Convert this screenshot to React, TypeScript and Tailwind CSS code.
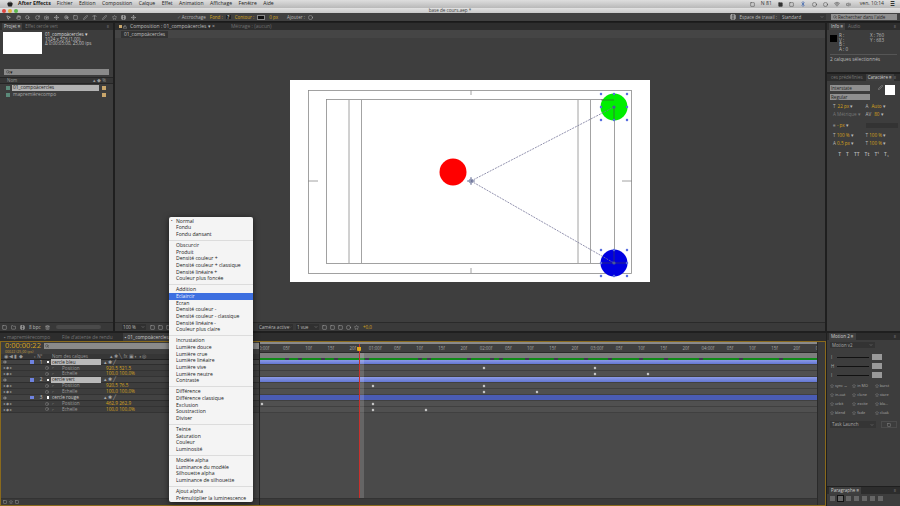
import {
  Apple, Bluetooth, Camera, ChevronDown, Circle, Clock, Eye, Film, Folder, Hand, Lock, MousePointer2, Move, Pen, RotateCw, Search, Square, Star, Trash2, Type, Volume2, Wifi, ZoomIn,
} from "lucide-react";

const FONT = { fontFamily: '"Open Sans", "Liberation Sans", sans-serif' };

const menuGroups = [
  ["Normal", "Fondu", "Fondu dansant"],
  ["Obscurcir", "Produit", "Densité couleur +", "Densité couleur + classique", "Densité linéaire +", "Couleur plus foncée"],
  ["Addition", "Eclaircir", "Ecran", "Densité couleur -", "Densité couleur - classique", "Densité linéaire -", "Couleur plus claire"],
  ["Incrustation", "Lumière douce", "Lumière crue", "Lumière linéaire", "Lumière vive", "Lumière neutre", "Contraste"],
  ["Différence", "Différence classique", "Exclusion", "Soustraction", "Diviser"],
  ["Teinte", "Saturation", "Couleur", "Luminosité"],
  ["Modèle alpha", "Luminance du modèle", "Silhouette alpha", "Luminance de silhouette"],
  ["Ajout alpha", "Prémultiplier la luminescence"],
];

const layers = [
  { kind: "layer", name: "cercle bleu", selected: true, color: "#6f83e0", bar: "bg-gradient-to-b from-[#8c9ae6] to-[#6477d2]", keys: [] as number[] },
  { kind: "prop", name: "Position", value: "920,5 521,5", keys: [484, 595] },
  { kind: "prop", name: "Echelle", value: "100,0 100,0%", keys: [595, 648] },
  { kind: "layer", name: "cercle vert", selected: true, color: "#6f83e0", bar: "bg-gradient-to-b from-[#8c9ae6] to-[#6477d2]", keys: [] },
  { kind: "prop", name: "Position", value: "920,5 76,5", keys: [373, 484] },
  { kind: "prop", name: "Echelle", value: "100,0 100,0%", keys: [484, 537] },
  { kind: "layer", name: "cercle rouge", selected: false, color: "#6f83e0", bar: "bg-[#4a5cb4]", keys: [] },
  { kind: "prop", name: "Position", value: "462,9 262,9", keys: [262, 373] },
  { kind: "prop", name: "Echelle", value: "100,0 100,0%", keys: [373, 426] },
];

const rulerLabels = ["0:00f", "05f", "10f", "15f", "20f", "01:00f", "05f", "10f", "15f", "20f", "02:00f", "05f", "10f", "15f", "20f", "03:00f", "05f", "10f", "15f", "20f", "04:00f", "05f", "10f", "15f", "20f", "05:"];
const workMarks = [286, 299, 322, 335, 366, 419, 428, 468, 491, 500, 526, 555, 585, 609, 640, 665, 700, 740, 780];

function Tab({ label, active }: { label: string; active?: boolean }) {
  return (
    <div className={`flex h-full shrink-0 items-center whitespace-nowrap px-[2px] text-[4.5px] ${active ? "bg-[#3f3f3f] text-[#cfcfcf]" : "text-[#777]"}`}>
      {label}
    </div>
  );
}

function PanelTabs({ tabs }: { tabs: { label: string; active?: boolean }[] }) {
  return (
    <div className="flex h-[7px] shrink-0 items-center justify-between overflow-hidden bg-[#2d2d2d] pl-[2px] pr-[4px]">
      <div className="flex h-full items-center gap-[1px]">
        {tabs.map((t) => (
          <Tab key={t.label} label={t.label} active={t.active} />
        ))}
      </div>
      <span className="shrink-0 text-[4px] text-[#aaa]">≡</span>
    </div>
  );
}

function ContextMenu() {
  return (
    <div className="absolute left-[169px] top-[217px] w-[84px] rounded-[2px] bg-[#f4f4f4] py-[1px] text-[5.1px] text-[#222] shadow-[0_1px_6px_rgba(0,0,0,0.6)]">
      {menuGroups.map((group, i) => (
        <div key={i} className={i > 0 ? "mt-[2px] border-t border-[#dcdcdc] pt-[1.2px]" : ""}>
          {group.map((item) => (
            <div
              key={item}
              className={`flex h-[6.7px] items-center whitespace-nowrap pl-[7px] ${item === "Eclaircir" ? "bg-[#3d6fe0] text-[#e8ecff]" : ""}`}
            >
              {item === "Normal" && <span className="absolute left-[2px] text-[4px]">•</span>}
              {item}
            </div>
          ))}
        </div>
      ))}
    </div>
  );
}

function CompDrawing() {
  const handles = (cx: number, cy: number) =>
    [-13, 0, 13].flatMap((dx) => [-13, 0, 13].filter((dy) => dx !== 0 || dy !== 0).map((dy) => [cx + dx, cy + dy]));
  return (
    <svg width="360" height="202" viewBox="290 80 360 202" className="block bg-white">
      <g fill="none" stroke="#8b8b8b" strokeWidth="0.8">
        <rect x="308.5" y="90.5" width="323" height="183" />
        <rect x="326.5" y="99.5" width="288" height="164" />
        <path d="M349 100V263M361.5 100V263M578 100V263M590.5 100V263" />
        <path d="M471 90V95M471 268V273M308 181H318M622 181H632" />
      </g>
      <circle cx="453" cy="172" r="13.5" fill="#ff0000" />
      <circle cx="614" cy="107" r="13.5" fill="#00ee00" />
      <circle cx="614" cy="263" r="13.5" fill="#0000e0" />
      <path d="M471 181L614 107M471 181L614 263" stroke="#77779a" strokeWidth="0.8" strokeDasharray="2 1" />
      <path d="M614 107V120M601 100H614M614 263V250M601 263H627" stroke="#444" strokeWidth="0.6" />
      <path d="M467 181H475M471 177V185" stroke="#55608a" strokeWidth="0.8" />
      <circle cx="471" cy="181" r="2" fill="none" stroke="#55608a" strokeWidth="0.6" />
      {[...handles(614, 107), ...handles(614, 263)].map(([x, y]) => (
        <rect key={`${x}-${y}`} x={x - 1.2} y={y - 1.2} width="2.4" height="2.4" rx="1" fill="#5a6fe0" />
      ))}
      <circle cx="614" cy="107" r="1.6" fill="#4a5a9a" />
      <circle cx="614" cy="263" r="1.6" fill="#4a5a9a" />
    </svg>
  );
}

function MenuBar() {
  const items = ["Fichier", "Edition", "Composition", "Calque", "Effet", "Animation", "Affichage", "Fenêtre", "Aide"];
  return (
    <div className="flex h-[8px] shrink-0 items-center justify-between bg-gradient-to-b from-[#dedede] to-[#b9b9b9] pl-[7px] pr-[5px] text-[5.1px] text-[#222]">
      <div className="flex items-center">
        <Apple size={6} fill="#222" strokeWidth={1} />
        <span className="ml-[5px] text-[5.3px] font-bold">After Effects</span>
        <div className="ml-[6px] flex gap-[6.5px]">
          {items.map((m) => (
            <span key={m}>{m}</span>
          ))}
        </div>
      </div>
      <div className="flex items-center gap-[6px] text-[#333]">
        <Square size={5} />
        <span>N 81</span>
        <Square size={5} fill="#333" />
        <Square size={5} />
        <Bluetooth size={6} className="text-[#1c4fa8]" />
        <Circle size={5} />
        <Circle size={5} />
        <Wifi size={6} />
        <Volume2 size={5} />
        <span className="ml-[3px]">ven. 10:14</span>
        <span className="text-[6px]">≣</span>
      </div>
    </div>
  );
}

function TitleBar() {
  return (
    <div className="relative flex h-[5px] shrink-0 items-center justify-center bg-gradient-to-b from-[#e2e2e2] to-[#c8c8c8]">
      <div className="absolute left-[2px] top-[0.5px] flex gap-[2px]">
        <div className="size-[4px] rounded-full bg-[#e0443e]" />
        <div className="size-[4px] rounded-full bg-[#e2b33c]" />
        <div className="size-[4px] rounded-full bg-[#5cb84c]" />
      </div>
      <span className="text-[4.6px] leading-none text-[#444]">base de cours.aep *</span>
    </div>
  );
}

function ToolBar() {
  const tools = [MousePointer2, Hand, Search, RotateCw, Camera, Move, ZoomIn, Square, Pen, Type, Pen, Star, Film, Move];
  return (
    <div className="flex h-[9px] shrink-0 items-center justify-between border-b border-[#1a1a1a] bg-[#404040] pl-[6px] pr-[3px] text-[4.5px] text-[#bbb]">
      <div className="flex items-center">
        <div className="flex items-center gap-[4.6px]">
          {tools.map((Icon, i) => (
            <Icon key={i} size={5} className={i === 0 ? "text-white" : "text-[#c8c8c8]"} />
          ))}
        </div>
        <span className="ml-[41px] text-[#777]">✓</span>
        <span className="ml-[1px]">Accrochage</span>
        <span className="ml-[4px] text-[#d7a31c]">Fond :</span>
        <span className="ml-[3px] bg-[#222] px-[1.5px] text-white">?</span>
        <span className="ml-[4px] text-[#d7a31c]">Contour :</span>
        <span className="ml-[3px] h-[5px] w-[8px] border border-[#888] bg-[#111]" />
        <span className="ml-[4px] text-[#d7a31c]">0 px</span>
        <span className="ml-[9px]">Ajouter :</span>
        <Circle size={5} className="ml-[3px]" />
      </div>
      <div className="flex items-center">
        <Film size={6} className="text-[#ccc]" />
        <span className="ml-[3px]">Espace de travail :</span>
        <div className="ml-[3px] flex h-[6px] w-[46px] items-center justify-between bg-[#353535] px-[2px]">
          <span>Standard</span>
          <ChevronDown size={4} />
        </div>
        <div className="ml-[5px] flex h-[6px] w-[66px] items-center bg-[#8f8f8f] px-[2px] text-[#222]">
          <Search size={4} />
          <span className="ml-[1px]">Rechercher dans l'aide</span>
        </div>
      </div>
    </div>
  );
}

function ProjectPanel() {
  return (
    <div className="flex w-[113px] shrink-0 flex-col bg-[#3d3d3d]">
      <PanelTabs tabs={[{ label: "Projet ≡", active: true }, { label: "Effet cercle vert" }]} />
      <div className="flex px-[3px] pt-[2px]">
        <div className="h-[22px] w-[39px] bg-white" />
        <div className="ml-[3px] text-[4.5px] leading-[4.5px] text-[#c4c4c4]">
          <div className="text-[#ddd]">01_compoàcercles ▾</div>
          <div>1024 x 576 (1,00)</div>
          <div>Δ 0:00:05:00, 25,00 ips</div>
        </div>
      </div>
      <div className="mx-[4px] mt-[15px] flex h-[6px] items-center bg-[#8a8a8a] px-[2px] text-[4.5px] text-[#222]">
        <Search size={4} />▾
      </div>
      <div className="mt-[2px] flex h-[7px] items-center justify-between border-y border-[#262626] bg-[#363636] px-[7px] text-[4.5px] text-[#999]">
        <span>Nom</span>
        <span>▴ ◆ %</span>
      </div>
      <div className="flex h-[7px] items-center pl-[6px]">
        <div className="size-[4px] bg-[#5b8a7a]" />
        <div className="ml-[2px] flex h-[6px] w-[87px] items-center bg-[#b3b3b3] px-[1px] text-[4.8px] text-[#222]">01_compoàcercles</div>
        <div className="ml-[3px] size-[4px] bg-[#c9a66b]" />
      </div>
      <div className="flex h-[7px] items-center pl-[6px]">
        <div className="size-[4px] bg-[#5b8a7a]" />
        <div className="ml-[2px] w-[87px] px-[1px] text-[4.8px] text-[#aaa]">mapremièrecompo</div>
        <div className="ml-[3px] size-[4px] bg-[#c9a66b]" />
      </div>
      <div className="flex-1" />
      <div className="flex h-[9px] items-center gap-[4px] border-t border-[#282828] bg-[#383838] pl-[2px] text-[4.6px] text-[#bbb]">
        <Square size={5} />
        <Folder size={5} />
        <Film size={5} />
        <span>8 bpc</span>
        <Trash2 size={5} />
        <div className="ml-[2px] h-[4px] flex-1 rounded-sm bg-[#4a4a4a]" />
        <div className="w-[8px]" />
      </div>
    </div>
  );
}

function Viewer() {
  return (
    <div className="flex min-w-0 flex-1 flex-col bg-[#3e3e3e]">
      <div className="flex h-[7px] shrink-0 items-center bg-[#2d2d2d] pl-[4px] text-[5px]">
        <span className="size-[3px] bg-[#c9a66b]" />
        <Lock size={4} className="ml-[1px] text-[#bbb]" />
        <span className="ml-[3px] text-[#bdbdbd]">Composition : 01_compoàcercles ▾ ×</span>
        <span className="ml-[16px] text-[#6f6f6f]">Métrage : (aucun)</span>
      </div>
      <div className="flex h-[8px] shrink-0 items-end bg-[#454545] pl-[6px]">
        <div className="flex h-[7px] items-center bg-[#333] px-[3px] text-[4.8px] text-[#c0c0c0]">01_compoàcercles</div>
      </div>
      <div className="flex flex-1 justify-center pt-[42px]">
        <CompDrawing />
      </div>
      <div className="flex h-[9px] shrink-0 items-center whitespace-nowrap border-t border-[#2a2a2a] bg-[#3a3a3a] pl-[7px] text-[4.6px] text-[#bbb]">
        <div className="flex h-[6px] w-[24px] items-center justify-between bg-[#303030] px-[1px]">
          <span>100 %</span>
          <ChevronDown size={4} />
        </div>
        <div className="ml-[4px] flex items-center gap-[3px]">
          <Square size={5} /><Square size={5} /><Square size={5} />
        </div>
        <div className="flex-1" />
        <div className="flex h-[6px] w-[35px] items-center justify-between bg-[#303030] px-[1px]">
          <span>Caméra active</span>
          <ChevronDown size={4} />
        </div>
        <div className="ml-[3px] flex h-[6px] w-[23px] items-center justify-between bg-[#303030] px-[1px]">
          <span>1 vue</span>
          <ChevronDown size={4} />
        </div>
        <div className="ml-[3px] flex items-center gap-[3px]">
          <Square size={5} /><Square size={5} /><Square size={5} /><Circle size={5} /><Star size={5} />
        </div>
        <span className="ml-[4px] text-[#d7a31c]">+0,0</span>
        <div className="w-[453px] shrink-0" />
      </div>
    </div>
  );
}

function RightPanels() {
  return (
    <div className="flex w-[73px] shrink-0 flex-col gap-[2px] text-[#bbb]">
      <div className="flex h-[49px] shrink-0 flex-col bg-[#3d3d3d]">
        <PanelTabs tabs={[{ label: "Info ≡", active: true }, { label: "Audio" }]} />
        <div className="flex pl-[3px] pt-[3px] text-[4.6px] leading-[4.7px]">
          <div className="mt-[2px] size-[7px] bg-black" />
          <div className="ml-[2px] w-[31px]">
            <div>R :</div><div>V :</div><div>B :</div><div>A : 0</div>
          </div>
          <div>
            <div>X : 760</div><div>Y : 683</div>
          </div>
        </div>
        <div className="mx-[3px] mt-[2px] border-t border-[#555] pt-[2px] text-[4.8px]">2 calques sélectionnés</div>
      </div>
      <div className="flex min-h-0 flex-1 flex-col bg-[#3d3d3d] text-[4.6px]">
        <PanelTabs tabs={[{ label: "ces prédéfinies" }, { label: "Caractère ≡", active: true }]} />
        <div className="mt-[4px] flex pl-[3px]">
          <div className="flex flex-col gap-[3px]">
            <div className="flex h-[6px] w-[40px] items-center bg-[#8f8f8f] px-[1px] text-[#222]">Interstate</div>
            <div className="flex h-[6px] w-[40px] items-center bg-[#8f8f8f] px-[1px] text-[#222]">Regular</div>
          </div>
          <Pen size={5} className="ml-[8px]" />
          <div className="ml-[2px] size-[10px] bg-white" />
        </div>
        <div className="mt-[4px] grid grid-cols-2 gap-y-[3.4px] pl-[6px] pr-[2px]">
          <span><span className="mr-[2px]">T</span><span className="text-[#d7a31c]">22 px</span> ▾</span>
          <span><span className="mr-[3px]">A</span><span className="text-[#d7a31c]">Auto</span> ▾</span>
          <span className="text-[#777]">A Métrique ▾</span>
          <span><span className="mr-[3px]">AV</span><span className="text-[#d7a31c]">80</span> ▾</span>
          <span className="mt-[3px]">≡ <span className="text-[#d7a31c]">- px</span> ▾</span>
          <span className="mt-[3px] h-[5px] bg-[#333]" />
          <span className="mt-[2px]">T <span className="text-[#d7a31c]">100 %</span> ▾</span>
          <span className="mt-[2px]">T <span className="text-[#d7a31c]">100 %</span> ▾</span>
          <span>A <span className="text-[#d7a31c]">0,5 px</span> ▾</span>
          <span>T <span className="text-[#d7a31c]">100 %</span> ▾</span>
        </div>
        <div className="mt-[6px] flex justify-center gap-[5px] text-[5px] font-semibold">
          <span>T</span><span>T</span><span>TT</span><span>Tt</span><span>T¹</span><span>T₁</span>
        </div>
      </div>
    </div>
  );
}

function TimelineLeft() {
  return (
    <div className="flex w-[260px] shrink-0 flex-col border-r border-[#222] bg-[#434343]">
      <div className="flex h-[13px] shrink-0 items-start bg-[#3d3d3d] pl-[5px] pt-[1px]">
        <div>
          <div className="text-[7.5px] leading-[7px] text-[#d7a31c]">0:00:00:22</div>
          <div className="mt-[1px] text-[3.6px] leading-[4px] text-[#c9a040]">00022 (25,00 ips)</div>
        </div>
        <div className="ml-[3px] mt-[1px] flex h-[6px] flex-1 items-center bg-[#8a8a8a] px-[1px] text-[#222]">
          <Search size={4} />
        </div>
      </div>
      <div className="flex h-[5.5px] shrink-0 items-center border-b border-[#222] bg-[#363636] pl-[4px] text-[4.5px] text-[#999]">
        <span className="w-[30px]">◉ ◀ ▮ ◆</span>
        <span className="w-[18px]">🞄 N°</span>
        <span className="w-[58px]">Nom des calques</span>
        <span>▴ ✱ ╲ fx ▣ ◐ ◑ ◎</span>
      </div>
      {layers.map((row, i) =>
        row.kind === "layer" ? (
          <div key={i} className="flex h-[5.95px] items-center border-b border-[#2e2e2e] bg-[#424242] pl-[3px] text-[4.7px] text-[#c8c8c8]">
            <Eye size={4} className="shrink-0" />
            <div className="w-[23px]" />
            <div className="size-[3.5px] shrink-0" style={{ background: row.color }} />
            <span className="ml-[3px] w-[9px] shrink-0 text-center">{(i + 3) / 3}</span>
            <div className="ml-[1px] size-[2.5px] shrink-0 bg-white" />
            <div className={`ml-[2px] flex h-[5.5px] w-[50px] shrink-0 items-center px-[1px] ${row.selected ? "bg-[#b9b9b9] text-[#222]" : ""}`}>{row.name}</div>
            <span className="ml-[3px] text-[#aaa]">▴ ✱ ╱</span>
          </div>
        ) : (
          <div key={i} className="flex h-[5.95px] items-center border-b border-[#333] bg-[#3d3d3d] pl-[3px] text-[4.7px] text-[#9a9a9a]">
            <span className="w-[42px] shrink-0 text-[3.5px]">◂ ◆ ▸</span>
            <Clock size={4} className="shrink-0" />
            <span className="ml-[3px] w-[10px] shrink-0 text-[3.5px]">⌐</span>
            <span className="w-[44px] shrink-0">{row.name}</span>
            <span className="text-[#d7a31c]">{row.value}</span>
          </div>
        ),
      )}
      <div className="flex-1" />
      <div className="flex h-[8px] shrink-0 items-center gap-[2px] border-t border-[#333] bg-[#3a3a3a] pb-[2px] pl-[3px] text-[#bbb]">
        <Square size={4} />
        <Star size={4} />
        <Square size={4} />
      </div>
    </div>
  );
}

function TimelineRight() {
  return (
    <div className="relative flex min-w-0 flex-1 flex-col bg-[#444]">
      <div className="mt-[1px] h-[2px] shrink-0 bg-[#8a8a8a]" />
      <div className="flex h-[9px] shrink-0 items-center overflow-hidden border-b border-[#2a2a2a] bg-[#3f3f3f] text-[4.4px] text-[#a5a5a5]">
        <div className="ml-[-7px] flex">
          {rulerLabels.map((label, i) => (
            <span key={i} className="w-[22.2px] shrink-0 text-center">{label}</span>
          ))}
        </div>
      </div>
      <div className="h-[5px] shrink-0 bg-[#7d7d7d]" />
      <div className="relative mr-[9px] h-[1.5px] shrink-0 bg-[#0f8a18]">
        {workMarks.map((x) => (
          <div key={x} className="absolute top-0 h-full w-[4px] bg-[#3c3c4c]" style={{ left: x - 261 }} />
        ))}
      </div>
      {layers.map((row, i) => (
        <div key={i} className="relative mr-[9px] h-[5.95px] shrink-0 border-b border-[#404040] bg-[#505050]">
          {row.kind === "layer" && <div className={`h-full ${row.bar}`} />}
          {row.keys.map((x) => (
            <div key={x} className="absolute top-[1.5px] size-[2px] rotate-45 bg-[#d8d8d8]" style={{ left: x - 261 }} />
          ))}
        </div>
      ))}
      <div className="mr-[9px] flex-1 bg-[#4a4a4a]" />
      <div className="mr-[9px] h-[8px] shrink-0 border-t border-[#333] bg-[#3a3a3a]" />
      <div className="absolute bottom-[8px] left-[100px] top-[12px] w-[4px] bg-white/15" />
      <div className="absolute bottom-[8px] left-[99px] top-[3px] w-px bg-[#c8302c]" />
      <div className="absolute left-[97px] top-[6px] h-[4px] w-[4px] rounded-b-[1px] bg-[#e0a81c]" />
      <div className="absolute bottom-0 right-0 top-0 w-[9px] border-l border-[#2a2a2a] bg-[#3a3a3a]" />
    </div>
  );
}

function Timeline() {
  return (
    <div className="flex min-w-0 flex-1 flex-col">
      <div className="flex h-[8px] shrink-0 items-center gap-[4px] bg-[#2d2d2d] pl-[4px] text-[4.8px] text-[#777]">
        <span>▪ mapremièrecompo</span>
        <span className="ml-[8px]">File d'attente de rendu</span>
        <span className="ml-[6px] flex h-full items-center bg-[#3d3d3d] px-[2px] text-[#c8c8c8]">▪ 01_compoàcercles ≡</span>
      </div>
      <div className="relative flex min-h-0 flex-1">
        <TimelineLeft />
        <TimelineRight />
        <div className="pointer-events-none absolute inset-0 border border-[#8a6a1c]" />
      </div>
    </div>
  );
}

function MotionPanel() {
  const labels = ["sync ↔", "in MO", "burst", "in-out", "clone", "stare", "orbit", "excite", "bla...", "blend", "fade", "cloak"];
  return (
    <div className="flex w-[73px] shrink-0 flex-col gap-[1px] text-[4.4px] text-[#aaa]">
      <div className="flex min-h-0 flex-1 flex-col bg-[#3d3d3d]">
        <PanelTabs tabs={[{ label: "Motion 2 ≡", active: true }]} />
        <div className="mt-[2px] ml-[3px] flex h-[6px] w-[45px] items-center justify-between bg-[#333] px-[2px]">
          <span>Motion v2</span>
          <ChevronDown size={4} />
        </div>
        <div className="mt-[6px] flex flex-col gap-[3px] pl-[4px] pr-[18px]">
          {["I", "H", "I"].map((s, i) => (
            <div key={i} className="flex h-[6px] items-center">
              <span className="w-[6px]">{s}</span>
              <div className="h-[1px] flex-1 bg-[#111]" />
              <div className="ml-[3px] h-[6px] w-[10px] bg-[#999]" />
            </div>
          ))}
        </div>
        <div className="mt-[5px] grid grid-cols-3 gap-y-[4px] px-[3px]">
          {labels.map((l) => (
            <div key={l} className="flex h-[5px] items-center gap-[1px] whitespace-nowrap">
              <Star size={4} className="shrink-0" />
              <span className="text-[3.8px]">{l}</span>
            </div>
          ))}
        </div>
        <div className="mt-[6px] flex gap-[5px] px-[3px]">
          <div className="flex h-[7px] w-[46px] items-center justify-between bg-[#353535] px-[2px] text-[4.6px]">
            <span>Task Launch</span>
            <ChevronDown size={4} />
          </div>
          <div className="flex h-[7px] flex-1 items-center justify-center border border-[#4c4c4c]">
            <Square size={4} />
          </div>
        </div>
      </div>
      <div className="flex h-[19px] shrink-0 flex-col bg-[#3d3d3d]">
        <PanelTabs tabs={[{ label: "Paragraphe ≡", active: true }]} />
        <div className="mt-[2px] flex gap-[3px] pl-[3px]">
          {[0, 1, 2, 3, 4, 5, 6].map((i) => (
            <div key={i} className={`size-[5px] bg-[#666] ${i === 1 ? "outline outline-[#111]" : ""}`} />
          ))}
        </div>
      </div>
    </div>
  );
}

export default function App() {
  return (
    <div className="relative flex h-[506px] w-[900px] flex-col overflow-hidden bg-[#1f1f1f] leading-none" style={FONT}>
      <MenuBar />
      <TitleBar />
      <ToolBar />
      <div className="flex h-[309px] shrink-0 gap-[2px] pt-[1px]">
        <ProjectPanel />
        <Viewer />
        <RightPanels />
      </div>
      <div className="flex min-h-0 flex-1 gap-[1px] pt-[2px]">
        <Timeline />
        <MotionPanel />
      </div>
      <ContextMenu />
    </div>
  );
}
